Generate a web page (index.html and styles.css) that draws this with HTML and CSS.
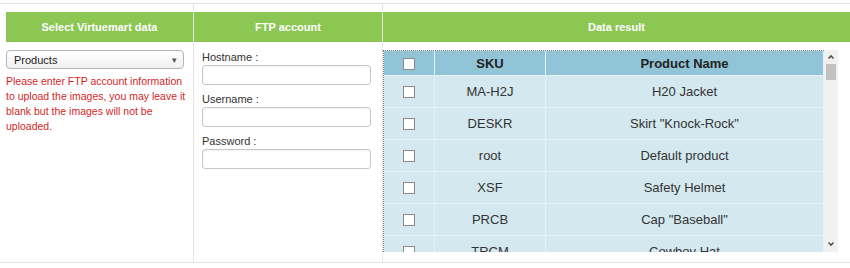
FILE: index.html
```html
<!DOCTYPE html>
<html lang="en">
<head>
    <meta charset="UTF-8">
    <meta name="viewport" content="width=device-width, initial-scale=1.0">
    <title>Virtuemart Export</title>
    <link rel="stylesheet" href="styles.css">
</head>
<body>
    <div class="panel">
        <div class="col col-select">
            <div class="col-head">Select Virtuemart data</div>
            <div class="select-box">
                <span>Products</span>
                <span class="arrow">&#9662;</span>
            </div>
            <p class="warning">Please enter FTP account information to upload the images, you may leave it blank but the images will not be uploaded.</p>
        </div>

        <div class="col col-ftp">
            <div class="col-head">FTP account</div>
            <form class="ftp-form">
                <label for="hostname">Hostname :</label>
                <input type="text" id="hostname" name="hostname">

                <label for="username">Username :</label>
                <input type="text" id="username" name="username">

                <label for="password">Password :</label>
                <input type="password" id="password" name="password">
            </form>
        </div>

        <div class="col col-result">
            <div class="col-head">Data result</div>
            <div class="result-box">
                <div class="result-view">
                    <table class="result-table">
                        <thead>
                            <tr>
                                <th class="check"><input type="checkbox"></th>
                                <th class="sku">SKU</th>
                                <th>Product Name</th>
                            </tr>
                        </thead>
                        <tbody>
                            <tr><td class="check"><input type="checkbox"></td><td>MA-H2J</td><td>H20 Jacket</td></tr>
                            <tr><td class="check"><input type="checkbox"></td><td>DESKR</td><td>Skirt "Knock-Rock"</td></tr>
                            <tr><td class="check"><input type="checkbox"></td><td>root</td><td>Default product</td></tr>
                            <tr><td class="check"><input type="checkbox"></td><td>XSF</td><td>Safety Helmet</td></tr>
                            <tr><td class="check"><input type="checkbox"></td><td>PRCB</td><td>Cap "Baseball"</td></tr>
                            <tr><td class="check"><input type="checkbox"></td><td>TRCM</td><td>Cowboy Hat</td></tr>
                        </tbody>
                    </table>
                </div>
                <!-- fake scrollbar, the headless browser hides the real one -->
                <div class="scrollbar">
                    <svg class="scroll-arrow" width="14" height="12" viewBox="0 0 14 12">
                        <path d="M4.5 7.5 L7 5 L9.5 7.5" fill="none" stroke="#505050" stroke-width="1.6"/>
                    </svg>
                    <div class="scroll-thumb"></div>
                    <svg class="scroll-arrow down" width="14" height="12" viewBox="0 0 14 12">
                        <path d="M4.5 4.5 L7 7 L9.5 4.5" fill="none" stroke="#505050" stroke-width="1.6"/>
                    </svg>
                </div>
            </div>
        </div>
    </div>
</body>
</html>
```

FILE: styles.css
```css
body {
    font-family: "Liberation Sans", Arial, sans-serif;
    background-color: #fff;
    margin: 0;
    padding: 0;
}
.panel {
    display: flex;
    margin-top: 3px;
    height: 260px;
    border-top: 1px solid #e4e4e4;
    border-bottom: 1px solid #e4e4e4;
    box-sizing: border-box;
}
.col {
    box-sizing: border-box;
    padding-top: 8px;
}
.col-select {
    width: 194px;
    padding-left: 6px;
    border-right: 1px solid #e4e4e4;
}
.col-ftp {
    width: 189px;
    border-right: 1px solid #e4e4e4;
}
.col-result {
    flex: 1;
}
.col-head {
    background-color: #8cc653;
    color: #fff;
    font-size: 11px;
    font-weight: bold;
    height: 30px;
    line-height: 30px;
    text-align: center;
}
.select-box {
    display: flex;
    justify-content: space-between;
    align-items: center;
    width: 178px;
    height: 19px;
    margin-top: 8px;
    padding: 0 6px 0 7px;
    box-sizing: border-box;
    border: 1px solid #b5b5b5;
    border-radius: 4px;
    background: linear-gradient(#fff, #f1f1f1);
    font-size: 11px;
    color: #222;
}
.select-box .arrow {
    font-size: 9px;
    color: #555;
}
.warning {
    margin: 5px 0 0;
    color: #d21f26;
    font-size: 10.5px;
    line-height: 15px;
}
.ftp-form {
    display: flex;
    flex-direction: column;
    padding: 8px 0 0 8px;
}
.ftp-form label {
    font-size: 11px;
    color: #333;
    line-height: 14px;
    margin-bottom: 1px;
}
.ftp-form input {
    width: 169px;
    height: 20px;
    margin: 0 0 7px;
    box-sizing: border-box;
    border: 1px solid #c8c8c8;
    border-radius: 3px;
    box-shadow: inset 0 1px 2px rgba(0, 0, 0, 0.06);
}
.result-box {
    display: flex;
    margin-top: 8px;
    height: 202px;
}
.result-view {
    width: 440px;
    overflow: hidden;
    border-top: 1px dotted #777;
    border-left: 1px dotted #777;
}
.result-table {
    width: 440px;
    border-collapse: collapse;
    font-size: 13px;
    color: #333;
}
.result-table th,
.result-table td {
    border: 1px solid #e6f2f7;
    text-align: center;
    padding: 0;
}
.result-table tr:first-child th {
    border-top: none;
}
.result-table th:first-child,
.result-table td:first-child {
    border-left: none;
}
.result-table th {
    background-color: #92c4d7;
    color: #222;
    height: 24px;
}
.result-table td {
    background-color: #d4e8f0;
    height: 31px;
}
.result-table .check {
    width: 50px;
}
.result-table .sku {
    width: 110px;
}
.result-table input[type="checkbox"] {
    appearance: none;
    width: 12px;
    height: 12px;
    margin: 4px 0 0;
    border: 1px solid #8a8a8a;
    background-color: #fff;
}
.scrollbar {
    display: flex;
    flex-direction: column;
    width: 14px;
    background-color: #f1f1f1;
}
.scroll-arrow {
    display: block;
    margin-top: 1px;
}
.scroll-arrow.down {
    margin-top: auto;
    margin-bottom: 2px;
}
.scroll-thumb {
    width: 10px;
    height: 16px;
    margin: 1px 2px 0;
    background-color: #c1c1c1;
}
```
